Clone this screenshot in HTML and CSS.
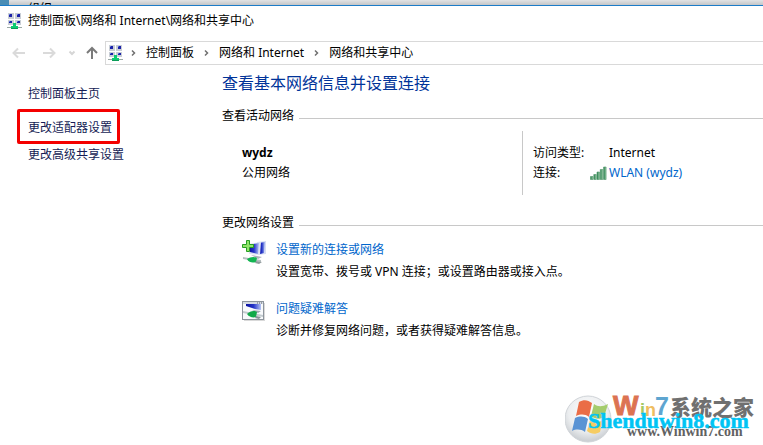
FILE: index.html
```html
<!DOCTYPE html>
<html lang="zh-CN">
<head>
<meta charset="utf-8">
<title>网络和共享中心</title>
<link rel="stylesheet" href="styles.css">
</head>
<body>
<svg class="defs" aria-hidden="true">
  <defs>
    <linearGradient id="screen" x1="0" y1="0" x2="1" y2="0"><stop offset="0" stop-color="#0a10a0"/><stop offset=".5" stop-color="#2434c8"/><stop offset="1" stop-color="#b4c4f4"/></linearGradient>
    <linearGradient id="bars" x1="0" y1="0" x2="1" y2="0"><stop offset="0" stop-color="#1f7a45"/><stop offset="1" stop-color="#9fd0ac"/></linearGradient>
    <radialGradient id="orb" cx=".5" cy=".35" r=".65"><stop offset="0" stop-color="#ffffff"/><stop offset=".65" stop-color="#eceef0"/><stop offset="1" stop-color="#c8ccd0"/></radialGradient>
    <symbol id="network" viewBox="0 0 15 16">
      <g fill="#c9ced6"><path d="M1 0h6v6H1zM8 0h6v6H8zM1 7h6v5H1zM8 7h6v5H8z"/></g>
      <g fill="#1c22a8"><path d="M2 1h3v3H2zM10 1h3v3h-3zM2 8h3v2H2zM10 8h3v2h-3z"/></g>
      <g fill="#5b75e0"><path d="M2 1h1v1H2zM10 1h1v1h-1zM2 8h1v1H2zM10 8h1v1h-1z"/></g>
      <path d="M0 14h15v1H0z" fill="#9aa8a4"/>
      <path d="M6 10h3v3h2v2H4v-2h2z" fill="#0ccb72"/>
      <path d="M4 15h7v1H4z" fill="#0a9c58"/>
    </symbol>
  </defs>
</svg>
<div class="desktop"><span class="desktop-label">组织</span></div>
<div class="window">
  <header class="titlebar">
    <svg class="app-icon"><use href="#network"/></svg>
    <span>控制面板\网络和 Internet\网络和共享中心</span>
  </header>
  <div class="toolbar">
    <div class="nav-buttons">
      <button class="nav" aria-label="后退"><svg width="14" height="12" viewBox="0 0 14 12"><path d="M13 6H1.500M6 1.500L1.500 6L6 10.500" stroke="#dadada"/></svg></button>
      <button class="nav forward" aria-label="前进"><svg width="14" height="12" viewBox="0 0 14 12"><path d="M1 6h11.500M8 1.500L12.500 6L8 10.500" stroke="#dadada"/></svg></button>
      <button class="nav recent" aria-label="最近位置"><svg width="8" height="6" viewBox="0 0 8 6"><path d="M1.500 1.500L4 4L6.500 1.500" stroke="#d6d6d6"/></svg></button>
      <button class="nav up" aria-label="向上"><svg width="12" height="14" viewBox="0 0 12 14"><path d="M6 13V2M1 7L6 2L11 7" stroke="#7a7a7a"/></svg></button>
    </div>
    <nav class="address" aria-label="地址">
      <svg class="app-icon"><use href="#network"/></svg>
      <svg class="chevron" viewBox="0 0 5 8"><path d="M1 1.500L3.500 4L1 6.500"/></svg>
      <a href="#">控制面板</a>
      <svg class="chevron" viewBox="0 0 5 8"><path d="M1 1.500L3.500 4L1 6.500"/></svg>
      <a href="#">网络和 Internet</a>
      <svg class="chevron" viewBox="0 0 5 8"><path d="M1 1.500L3.500 4L1 6.500"/></svg>
      <a href="#">网络和共享中心</a>
    </nav>
  </div>
  <div class="body">
    <aside class="sidebar">
      <a class="home" href="#">控制面板主页</a>
      <a class="marked" href="#">更改适配器设置</a>
      <a class="advanced" href="#">更改高级共享设置</a>
    </aside>
    <main class="content">
      <h1>查看基本网络信息并设置连接</h1>
      <h2>查看活动网络</h2>
      <section class="network">
        <div class="identity">
          <strong>wydz</strong>
          <span>公用网络</span>
        </div>
        <dl class="details">
          <dt>访问类型:</dt><dd>Internet</dd>
          <dt>连接:</dt>
          <dd class="connection"><svg class="signal" viewBox="0 0 17 14"><g fill="url(#bars)" stroke="#4f9468" stroke-width=".6"><path d="M.5 10.500h2.500v3H.5z"/><path d="M3.800 8.500h2.500v5H3.800z"/><path d="M7 6h2.500v7.500H7z"/><path d="M10.300 3.500h2.500v10h-2.500z"/><path d="M13.600 1h2.500v12.500h-2.500z"/></g></svg><a href="#">WLAN (wydz)</a></dd>
        </dl>
      </section>
      <h2>更改网络设置</h2>
      <section class="tasks">
        <article class="task">
          <svg class="task-icon" viewBox="0 0 26 26">
            <path d="M15 3l9-1v13l-8 1z" fill="#d5dcf2"/><path d="M17 4l6-1-1 11-4 1z" fill="url(#screen)"/>
            <path d="M6 5l13-2-1 13-11-1z" fill="#dce2f3"/><path d="M7 6l10-2-1 11-8-2z" fill="url(#screen)"/>
            <path d="M9 16l6 1 5 1-4 2z" fill="#aeb4bd"/>
            <path d="M1 18l18 3v2L1 20z" fill="#b6bec0"/><path d="M5 20c3-2 7-3 10-1l-1 4c-3 1-7 1-9-3z" fill="#13b552"/><path d="M14 22l6 1-3 2-4-1z" fill="#8f999b"/>
            <path d="M4.500 1.500h3v4h4v3h-4v4h-3v-4h-4v-3h4z" fill="#8fe568" stroke="#279d23"/>
          </svg>
          <div><a href="#">设置新的连接或网络</a><p>设置宽带、拨号或 VPN 连接；或设置路由器或接入点。</p></div>
        </article>
        <article class="task">
          <svg class="task-icon" viewBox="0 0 26 26">
            <path d="M2 5h21v18H2z" fill="#d9d9d9"/><rect x=".5" y="3.500" width="21" height="18" fill="#f8fafc" stroke="#8d959d"/>
            <path d="M1 4h20v2H1z" fill="#d4dae2"/><path d="M15 5h1M17 5h1M19 5h1" stroke="#59616e"/>
            <path d="M4 6h15v6l-6-1-9-3z" fill="url(#screen)"/><path d="M10 12l9 1-3 2z" fill="#9ba5ae"/>
            <path d="M1 13l20 4v2L1 15z" fill="#c2cace"/><path d="M5 16c3-3 7-4 10-2l-1 5c-3 1-7 0-9-3z" fill="#12a94a"/><path d="M14 18l5 1-2 2-4-1z" fill="#89939a"/>
          </svg>
          <div><a href="#">问题疑难解答</a><p>诊断并修复网络问题，或者获得疑难解答信息。</p></div>
        </article>
      </section>
    </main>
  </div>
</div>
<svg class="watermark" viewBox="0 0 198 52">
  <circle cx="23" cy="26" r="23" fill="url(#orb)" stroke="#d0d4d8"/>
  <g transform="translate(0 1)">
    <path d="M14 8c5-3 9-2 13 1l-3 14c-4-3-8-3-13-1z" fill="#ea6d47"/>
    <path d="M29 10c4 3 8 3 14 0l-4 13c-5 3-9 2-13-1z" fill="#a4cc6c"/>
    <path d="M10 24c5-2 9-2 13 1l-3 13c-4-3-9-3-13-1z" fill="#5a93d4"/>
    <path d="M25 26c4 3 8 3 13 0l-3 12c-5 3-9 2-13-1z" fill="#f6cc62"/>
  </g>
  <g class="brand">
    <text x="48" y="22" class="brand-w">W</text>
    <text x="75" y="23" class="brand-in"><tspan fill="#a4c964">i</tspan><tspan fill="#efbd60">n</tspan></text>
    <text x="90" y="22" class="brand-7">7</text>
    <text x="105" y="22" class="brand-cn">系统之家</text>
  </g>
  <text x="62" y="43" class="brand-url">www.Winwin7.com</text>
  <text x="23" y="35" class="site">Shenduwin8.com</text>
</svg>
</body>
</html>
```
FILE: styles.css
```css
* { box-sizing: border-box; }
body {
  margin: 0;
  min-height: 100vh;
  background: #fff;
  color: #000;
  font: 12px/20px "Noto Sans", "Noto Sans CJK SC", sans-serif;
  overflow: hidden;
  position: relative;
}
a { color: inherit; text-decoration: none; }
.defs { position: absolute; width: 0; height: 0; }
.desktop {
  height: 5px;
  padding-left: 19px;
  overflow: hidden;
  border-left: 9px solid #4a8db5;
  background: linear-gradient(#e2e3e4, #c4c6c8);
}
.desktop-label { display: block; margin-top: -1px; }
.window { border-top: 1px solid #1c7cc8; }
.titlebar { display: flex; align-items: center; gap: 6px; height: 30px; padding-left: 7px; }
.app-icon { width: 15px; height: 16px; flex: none; }
.toolbar { display: flex; margin-top: 5px; height: 24px; }
.nav-buttons { display: flex; align-items: center; width: 105px; padding-left: 12px; flex: none; }
.nav { display: flex; padding: 0; border: 0; background: none; }
.nav path { fill: none; stroke-width: 2; }
.nav.forward { margin-left: 16px; }
.nav.recent { margin-left: 12px; }
.nav.up { margin-left: 10px; }
.address {
  display: flex;
  flex: 1;
  align-items: center;
  gap: 10px;
  padding-left: 2px;
  border: 1px solid #d9d9d9;
  border-right: 0;
  white-space: nowrap;
}
.address .app-icon { margin-right: -2px; }
.chevron { width: 5px; height: 8px; fill: none; stroke: #707070; stroke-width: 1.5; flex: none; }
.body { display: flex; }
.sidebar { display: flex; flex-direction: column; align-items: flex-start; width: 222px; flex: none; padding: 19px 0 0 17px; color: #151c55; }
.home, .advanced { padding-left: 11px; }
.marked { margin-top: 5px; padding: 8px 5px 6px 8px; border: 3px solid #f40000; border-radius: 2px; line-height: 15px; }
.advanced { margin-top: 1px; }
.content { flex: 1; min-width: 0; padding-top: 6px; }
h1 { margin: 0; color: #003399; font-size: 16px; font-weight: 400; line-height: 24px; }
h2 { display: flex; align-items: center; gap: 5px; margin: 11px 0 0; font-size: 12px; font-weight: 400; line-height: 20px; }
h2::after { content: ""; flex: 1; height: 1px; margin-top: 5px; background: #c8c8c8; }
.network { display: flex; margin-top: 5px; }
.identity { display: flex; flex-direction: column; width: 300px; padding: 12px 0 0 20px; }
.details { display: grid; grid-template-columns: 76px 1fr; flex: 1; align-content: start; min-height: 64px; margin: 0; padding: 12px 0 0 10px; border-left: 1px solid #c8c8c8; }
.details dd { margin: 0; }
.details a, .task a { color: #0066cc; }
.connection { display: flex; align-items: center; }
.signal { width: 17px; height: 14px; margin: 0 2px 0 -19px; }
.network + h2 { margin-top: 18px; }
.tasks { display: grid; gap: 15px; margin-top: 6px; padding-left: 20px; }
.task { display: flex; gap: 8px; }
.task a { display: block; line-height: 22px; }
.task p { margin: 0; line-height: 22px; }
.task-icon { width: 26px; height: 26px; flex: none; }
.watermark { position: absolute; right: 0; bottom: 0; width: 198px; height: 52px; font-weight: 700; }
.brand { font-family: "Liberation Sans", "Noto Sans CJK SC", sans-serif; }
.brand-w { font-size: 27px; fill: #dc7352; stroke: #dc7352; }
.brand-in { font-size: 18px; }
.brand-7 { font-size: 25px; fill: #5ea5d0; }
.brand-cn { font-size: 21px; font-weight: 900; fill: #707070; }
.brand-url { font: 700 14px "Liberation Serif", serif; fill: #626262; }
.site { font: 700 22px "Liberation Serif", serif; fill: #00c4f4; stroke: #00c4f4; stroke-width: .5; }
```
